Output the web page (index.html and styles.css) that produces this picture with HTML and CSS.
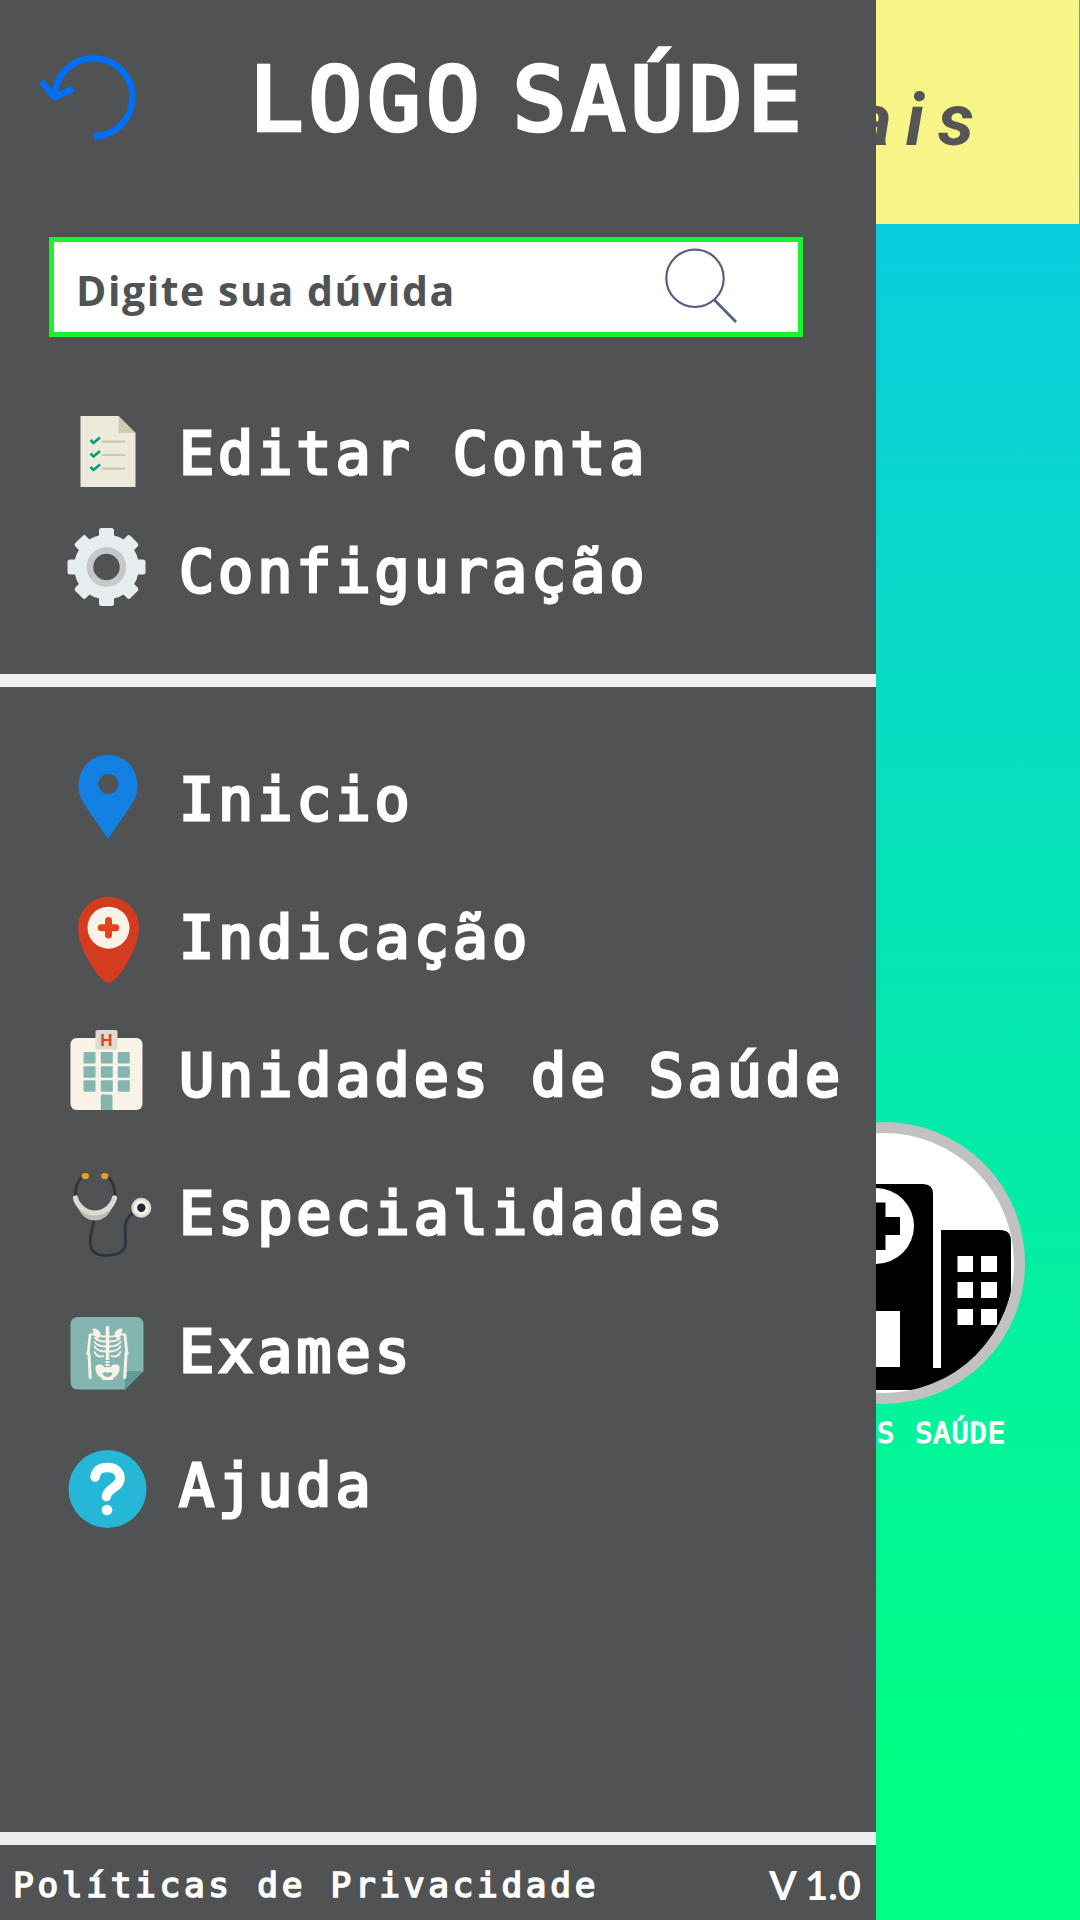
FILE: index.html
```html
<!DOCTYPE html>
<html lang="pt-BR">
<head>
<meta charset="utf-8">
<title>Logo Saúde</title>
<link rel="stylesheet" href="styles.css">
</head>
<body>
<main class="page">
  <header class="page-bar"><span class="page-title">ais</span></header>
  <section class="unit">
    <svg class="unit-icon" viewBox="743 1122 282 282" aria-hidden="true">
      <defs><clipPath id="disc"><circle cx="884" cy="1263" r="131"/></clipPath></defs>
      <circle cx="884" cy="1263" r="135.5" fill="#fff"/>
      <g clip-path="url(#disc)">
        <path d="M760 1390V1184H923Q933 1184 933 1194V1368H941V1230H1000Q1011 1230 1011 1241V1390Z"/>
        <circle cx="876" cy="1226" r="38" fill="#fff"/>
        <path d="M866 1202.5h19.5V1217H900v18h-14.500V1250H866V1235H852V1217h14z"/>
        <path fill="#fff" d="M852 1311h48v56h-48zM957.500 1256H973v16h-15.500zM981 1256h16v16h-16zM957.500 1282H973v16h-15.500zM981 1282h16v16h-16zM957.500 1309H973v16h-15.500zM981 1309h16v16h-16z"/>
      </g>
      <circle cx="884" cy="1263" r="135.5" fill="none" stroke="#c1c1c1" stroke-width="11"/>
    </svg>
    <span class="unit-label">UNIDADES SAÚDE</span>
  </section>
</main>

<aside class="drawer">
  <header class="drawer-head">
    <svg class="back" viewBox="0 0 240 210" aria-label="Voltar">
      <path d="M94 136.300A39 39 0 1 0 54.500 97M41.500 81.500L54.500 97.500L73.500 88.500" fill="none" stroke="#006ef5" stroke-width="6.500" stroke-linejoin="round"/>
    </svg>
    <h1 class="logo">LOGO SAÚDE</h1>
  </header>

  <div class="search">
    <span class="search-text">Digite sua dúvida</span>
    <svg class="search-icon" viewBox="660 242 82 90" aria-hidden="true">
      <g fill="none" stroke="#566084" stroke-width="2.200"><circle cx="695" cy="278.300" r="28.700"/><path d="M714 299.500L736 322" stroke-width="2.800"/></g>
    </svg>
  </div>

  <nav class="menu menu-account">
    <a class="item">
      <svg class="icon" viewBox="0 399 178 118">
        <path fill="#edeadb" d="M80 416h38l17 17v54H80z"/><path fill="#cfc9af" d="M118 416l17 17h-17z"/>
        <path d="M102 441.700h22M102 455h22M102 468.600h22" stroke="#cdc8ac" stroke-width="2.200" stroke-linecap="round"/>
        <path d="M90 440l3 3 6.500-5.500M90 453.500l3 3 6.500-5.500M90 467l3 3 6.500-5.500" fill="none" stroke="#0a9c82" stroke-width="2.600"/>
      </svg><span>Editar Conta</span></a>
    <a class="item">
      <svg class="icon" viewBox="0 517 178 118">
        <g fill="#e7edef">
          <circle cx="106" cy="567" r="32.500"/>
          <g id="teeth"><rect x="98.500" y="528" width="15" height="78" rx="2.500"/><rect x="67" y="559.500" width="78" height="15" rx="2.500"/></g>
          <use href="#teeth" transform="rotate(45 106 567)"/>
        </g>
        <circle cx="106" cy="567" r="16.500" fill="#505253" stroke="#c6c8c7" stroke-width="6.500"/>
      </svg><span>Configuração</span></a>
  </nav>

  <nav class="menu menu-main">
    <a class="item">
      <svg class="icon" viewBox="0 735 178 138">
        <path fill="#1281e3" fill-rule="evenodd" d="M107.500 839L84 804.500C80 798 78 793 78 786C78 768 91 755 107.500 755S137 768 137 786C137 793 135 798 131 804.500ZM107.700 774a10 10 0 1 0 .1 0Z"/>
      </svg><span>Inicio</span></a>
    <a class="item">
      <svg class="icon" viewBox="0 873 178 138">
        <path fill="#d43c20" d="M108 983C100 983 77.500 950 77.500 928C77.500 910 91 897 108 897S138.500 910 138.500 928C138.500 950 116 983 108 983Z"/>
        <circle cx="108" cy="927.700" r="21" fill="#f8f2e7"/>
        <path d="M108 920.500v14.500M100.800 927.700h14.500" stroke="#e8411f" stroke-width="7" stroke-linecap="round"/>
      </svg><span>Indicação</span></a>
    <a class="item">
      <svg class="icon" viewBox="0 1011 178 138">
        <rect x="70" y="1038" width="72" height="72" rx="6" fill="#f8f2e7"/>
        <rect x="95" y="1030" width="22" height="19.500" rx="2" fill="#dfdbd3"/>
        <text class="sign" x="105.800" y="1046">H</text>
        <g fill="#83b5b1"><path d="M100.300 1110V1096q0-1.500 1.500-1.500h8.700q1.500 0 1.500 1.500v14z"/>
          <g id="floor"><rect x="83" y="1052" width="12" height="11.500" rx="1"/><rect x="100.300" y="1052" width="12" height="11.500" rx="1"/><rect x="117.300" y="1052" width="12" height="11.500" rx="1"/></g>
          <use href="#floor" y="14.200"/><use href="#floor" y="28.300"/></g>
      </svg><span>Unidades de Saúde</span></a>
    <a class="item">
      <svg class="icon" viewBox="0 1149 178 138">
        <g fill="none" stroke="#2c353b" stroke-width="2.700">
          <path d="M82 1176.500Q75 1182 74.700 1196M107 1176.500Q114 1182 114.500 1196"/>
          <path d="M93.500 1220C93 1228 89.700 1231 89.700 1242C89.700 1252 96 1255.500 106 1255.500S125 1252 125 1243C125 1235 124 1228 125 1224C126.500 1218 129 1215 133 1213"/>
        </g>
        <path d="M77 1207Q94 1218 112 1207Q106 1220.500 94.500 1220.500T77 1207Z" fill="#bfbdb7"/>
        <path d="M75 1198C77 1206 85 1213 94.500 1213S112 1206 114 1198" fill="none" stroke="#dfdad1" stroke-width="5.200" stroke-linecap="round"/>
        <ellipse cx="84.800" cy="1176" rx="3.700" ry="3.100" fill="#e9a020"/><ellipse cx="104.300" cy="1176" rx="3.700" ry="3.100" fill="#e9a020"/>
        <circle cx="140.800" cy="1207.800" r="10" fill="#dfdad1"/><circle cx="140.800" cy="1207.800" r="7.500" fill="#f8f2e7"/><circle cx="140.800" cy="1207.800" r="4.200" fill="#222a31"/>
      </svg><span>Especialidades</span></a>
    <a class="item">
      <svg class="icon" viewBox="0 1287 178 138">
        <path fill="#83b5b1" d="M78 1317h57q8 0 8 8v46l-18.500 18.500H78q-8 0-8-8V1325q0-8 8-8z"/>
        <path fill="#5d9c98" d="M143 1371l-18.500 18.500V1376q0-5 5-5z"/>
        <g fill="none" stroke="#f8f2e7" stroke-linecap="round">
          <path stroke-width="3.600" d="M107 1327.500V1358"/>
          <path stroke-width="4" stroke-dasharray="2 1" stroke-linecap="butt" d="M107 1358V1369"/>
          <path stroke-width="1.800" d="M90 1334.500h8M116 1334.500h8M105 1336.500q-7 0-10-2.500M109 1336.500q7 0 10-2.500M105 1341.500q-7 0-10.500-3.500M109 1341.500q7 0 10.500-3.500M105 1346.500q-8 0-11-4.500M109 1346.500q8 0 11-4.500M105 1351.500q-8 0-11-5M109 1351.500q8 0 11-5M103 1356q-6 2-9-4M111 1356q6 2 9-4"/>
          <path stroke-width="2.700" d="M89.500 1335L87.700 1353M124.500 1335L126.300 1353"/>
          <path stroke-width="3" d="M88.500 1354L89.700 1377.500M125.500 1354L124.300 1377.500"/>
        </g>
        <path fill="#f8f2e7" d="M92 1329q4-2 8 4q0 4-3 6q-4-3-5-10zM122 1329q-4-2-8 4q0 4 3 6q4-3 5-10z"/>
        <path fill="#f8f2e7" fill-rule="evenodd" d="M95 1366q5-4 9 1l3 2 3-2q4-5 9-1q1 8-6 12q0 2-1.500 2h-9q-1.500 0-1.500-2q-7-4-6-12zM102 1373q1 4 5 4t5-4l-3-1-2 1-2-1z"/>
        <circle cx="87.700" cy="1353" r="2" fill="#f8f2e7"/><circle cx="126.300" cy="1353" r="2" fill="#f8f2e7"/>
      </svg><span>Exames</span></a>
    <a class="item item-help">
      <svg class="icon" viewBox="0 1425 178 131">
        <circle cx="107" cy="1489" r="39" fill="#26b7d6"/>
        <path d="M94.500 1477C96 1469 101 1467.500 107 1467.500C115 1467.500 119.500 1472 119.500 1478C119.500 1488 106.500 1488 106 1496.500" fill="none" stroke="#fff" stroke-width="9.500" stroke-linecap="round" stroke-linejoin="round"/>
        <circle cx="106.500" cy="1510" r="5.300" fill="#fff"/>
      </svg><span>Ajuda</span></a>
  </nav>

  <footer class="drawer-foot">
    <span class="policy">Políticas de Privacidade</span>
    <span class="version">V 1.0</span>
  </footer>
</aside>
</body>
</html>
```

FILE: styles.css
```css
* { box-sizing: border-box; }
body {
  display: grid;
  width: 1080px;
  height: 1920px;
  margin: 0;
  overflow: hidden;
}
.page, .drawer { grid-area: 1 / 1; }

/* Page behind the open drawer */
.page {
  display: flex;
  flex-direction: column;
  background: linear-gradient(#0cc6eb 0, #00ff85 1780px);
}
.page-bar {
  width: 1079px;
  height: 224px;
  padding: 79px 91px 0 0;
  background: #f7f588;
  text-align: right;
}
.page-title {
  font: italic 700 72px/84px Roboto, sans-serif;
  letter-spacing: 14px;
  color: #555;
}
.unit {
  display: flex;
  flex-direction: column;
  align-items: flex-end;
  width: 282px;
  margin: 898px 0 0 743px;
}
.unit-icon { width: 282px; height: 282px; }
.unit-label {
  margin: 8px 19px 0 0;
  font: 400 28.500px/43px "DejaVu Sans Mono", monospace;
  -webkit-text-stroke: 1.400px #fff;
  letter-spacing: 1px;
  word-spacing: 2px;
  white-space: nowrap;
  color: #fff;
}

/* Drawer */
.drawer {
  z-index: 1;
  display: flex;
  flex-direction: column;
  width: 876px;
  height: 1920px;
  background: #505253;
  color: #fff;
}
.drawer-head { display: flex; height: 237px; }
.back { width: 240px; height: 210px; }
.logo {
  margin: 0 0 0 10px;
  font: 400 88px/199px "DejaVu Sans Mono", monospace;
  -webkit-text-stroke: 4.500px #fff;
  letter-spacing: 5.800px;
  word-spacing: -31px;
  white-space: nowrap;
}
.search {
  display: flex;
  justify-content: space-between;
  width: 754px;
  height: 100px;
  margin-left: 49px;
  padding: 0 56px 0 22px;
  border: 5px solid #1cf22b;
  background: #fff;
}
.search-text {
  font: 700 41px/97px "Open Sans", sans-serif;
  letter-spacing: 1.550px;
  color: #505253;
}
.search-icon { width: 82px; height: 90px; }
.menu { display: flex; flex-direction: column; }
.menu-account { height: 350px; padding-top: 62px; border-bottom: 13px solid #eee; }
.menu-main { height: 1158px; padding-top: 48px; border-bottom: 13px solid #eee; }
.item {
  display: flex;
  height: 138px;
  font: 400 58.500px/131px "DejaVu Sans Mono", monospace;
  -webkit-text-stroke: 2.800px #fff;
  letter-spacing: 3.900px;
  white-space: nowrap;
}
.menu-account .item { height: 118px; line-height: 111px; }
.menu-main .item-help { height: 131px; line-height: 123px; }
.icon { flex: none; width: 179px; height: 100%; }
.sign {
  font: 700 17px "Liberation Sans", sans-serif;
  -webkit-text-stroke: 1.400px #e8411f;
  letter-spacing: 0;
  text-anchor: middle;
  fill: #e8411f;
}
.drawer-foot {
  display: flex;
  justify-content: space-between;
  height: 75px;
  padding: 0 15px 0 13px;
}
.policy {
  font: 400 34.500px/81px "DejaVu Sans Mono", monospace;
  -webkit-text-stroke: 1.600px #fff;
  letter-spacing: 3.650px;
}
.version {
  font: 700 40px/80px Lato, sans-serif;
}
```
